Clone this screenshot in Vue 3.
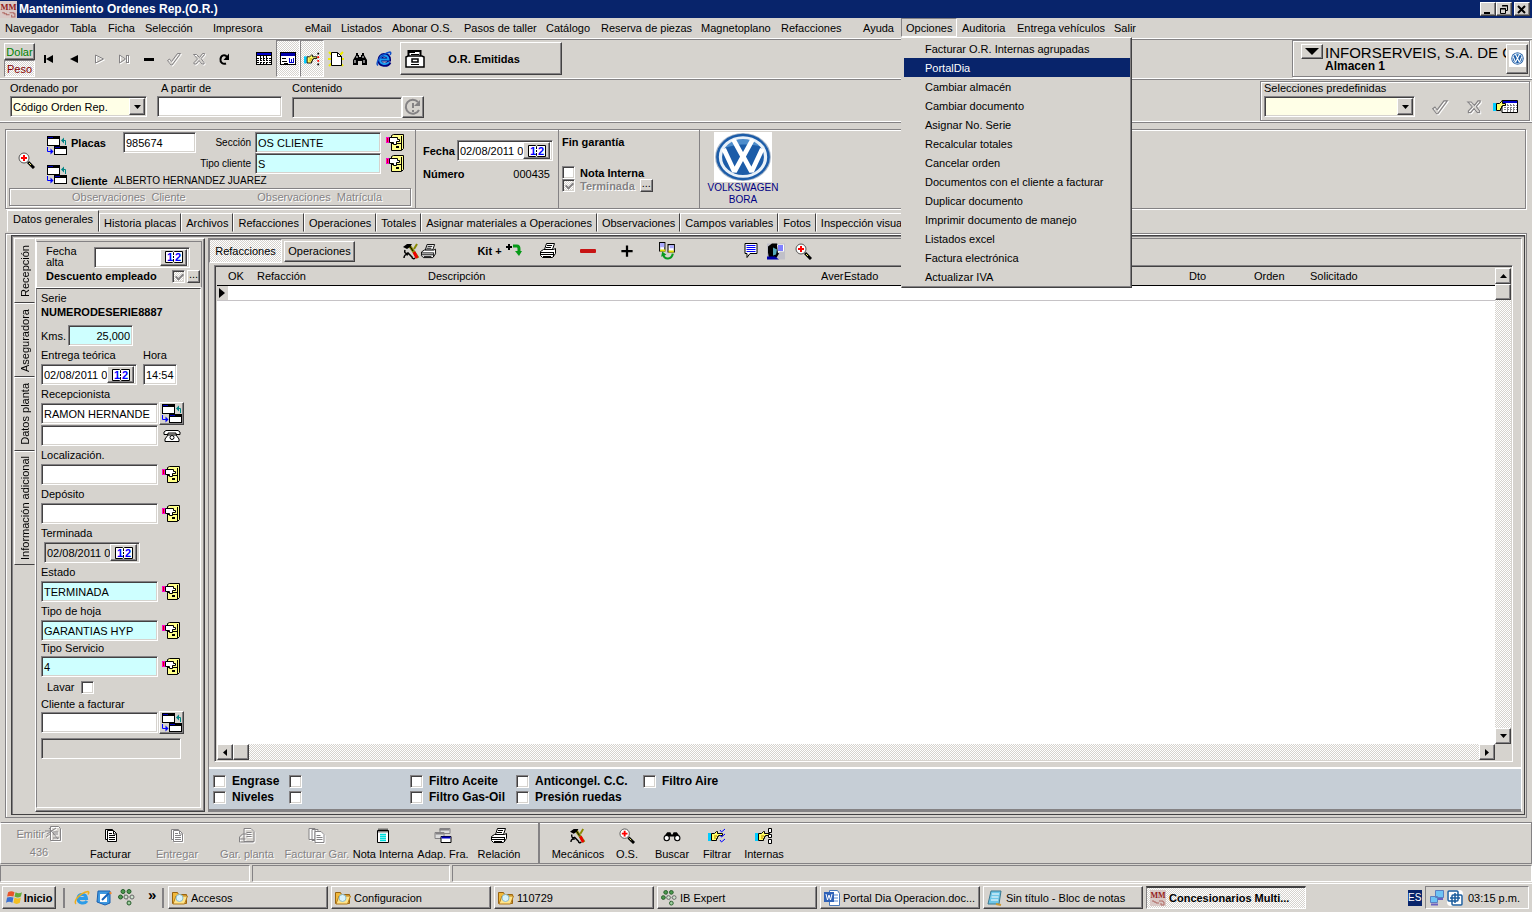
<template>
  <div class="app">
    <svg class="sprites" width="0" height="0" aria-hidden="true">
      <symbol id="app-logo" viewBox="0 0 16 16">
        <rect width="16" height="16" fill="#d9c9c6" />
        <text x="8" y="8" text-anchor="middle" font-family="Liberation Serif" font-size="8" font-weight="bold" fill="#941c1c">MM</text>
        <path d="M2 11h2v1h2v1h3M9 11h4v1h1v3h-3v-2" fill="none" stroke="#b06a64" />
      </symbol>
      <symbol id="first" viewBox="0 0 16 16"><path d="M3 4h2v8H3zM5 8l7-4v8z" fill="currentColor" /></symbol>
      <symbol id="prev" viewBox="0 0 16 16"><path d="M4 8l8-4v8z" fill="currentColor" /></symbol>
      <symbol id="next" viewBox="0 0 16 16"><path d="M4.500 4v8l8-4z" fill="none" stroke="currentColor" /></symbol>
      <symbol id="last" viewBox="0 0 16 16"><path d="M3.500 4v8l6-4zM10.500 4v8M12.500 4v8M10.500 4.500h2M10.500 11.500h2" fill="none" stroke="currentColor" /></symbol>
      <symbol id="minus" viewBox="0 0 16 16"><path d="M3 7h10v3H3z" fill="currentColor" /></symbol>
      <symbol id="plus" viewBox="0 0 16 16"><path d="M7 3h2v4h4v2H9v4H7V9H3V7h4z" fill="currentColor" /></symbol>
      <symbol id="check" viewBox="0 0 16 16"><path d="M1.500 9.500l2-1.500 2 2.500 6-8h3l-8.500 11.500h-1z" fill="none" stroke="currentColor" /></symbol>
      <symbol id="cross" viewBox="0 0 16 16"><path d="M2.500 3.500h3l3 3 3-4h2v1l-3.500 4 3 4v1.500h-2l-3-3.500-3 3.500h-2v-1.500l3.500-3.500-3-3.500z" fill="none" stroke="currentColor" /></symbol>
      <symbol id="redo" viewBox="0 0 16 16"><path d="M10 12.500c-3 1-6-1-5.500-4.500C5 4 9 3 11 6" fill="none" stroke="currentColor" stroke-width="2" /><path d="M13 2.500V9H7.500z" fill="currentColor" /></symbol>
      <symbol id="grid" viewBox="0 0 16 14">
        <path d="M0 0h16v13H0z" fill="#000" /><path d="M1 1h14v2H1z" fill="#00c" /><path d="M1 4h14v8H1z" fill="#fff" />
        <path d="M1 6.500h14M1 8.500h14M1 10.500h14M4.500 4v8M7.500 4v8M10.500 4v8" stroke="#000" stroke-dasharray="2 1" />
      </symbol>
      <symbol id="form" viewBox="0 0 16 14">
        <path d="M0 0h16v13H0z" fill="#000" /><path d="M1 1h14v3H1z" fill="#00a" /><path d="M1 4h14v8H1z" fill="#fff" />
        <path d="M2 6h4v1H2zM2 9h5v1H2zM4 11h4v1H4z" fill="#000" /><path d="M9 6h1v4h1V7h1v3h1V6h1v5H9z" fill="#00c" />
      </symbol>
      <symbol id="hand" viewBox="0 0 18 16">
        <path d="M0 5h3v8H0z" fill="#0cf" /><path d="M3.500 5.500h3l2-2h1v2h5v2h-4v1h-1v2h-1v2h-5z" fill="#ff6" stroke="#000" /><path d="M6 8h3M6 10h2" stroke="#b80" />
      </symbol>
      <symbol id="hand-list" viewBox="0 0 18 16"><use href="#hand" width="18" height="16" /><path d="M15 1h2v2h-2zM15 13h2v2h-2z" fill="#000" /><path d="M15 5h2v2h-2zM15 9h2v2h-2z" fill="#f00" /></symbol>
      <symbol id="hand-checks" viewBox="0 0 18 16"><use href="#hand" width="18" height="16" /><path d="M12 2l1.500 2L17 1M12 7l1.500 2L17 6M12 12l1.500 2 3.500-3" fill="none" stroke="#00f" /></symbol>
      <symbol id="hand-boxes" viewBox="0 0 18 16"><use href="#hand" width="18" height="16" /><path d="M13.500.5h3v4h-3zM13.500 6.500h3v3h-3zM13.500 11.500h3v4h-3z" fill="#fff" stroke="#000" /></symbol>
      <symbol id="hand-grid" viewBox="0 0 25 14">
        <path d="M0 3h3v8H0z" fill="#0cf" /><path d="M9 .5h15.500v12H9z" fill="#fff" stroke="#000" /><path d="M10 1h14v2H10z" fill="#00c" />
        <path d="M11 5.500h13M11 7.500h13M11 9.500h13M14.500 4v8M17.500 4v8M20.500 4v8" stroke="#848284" stroke-dasharray="2 1" />
        <path d="M3.500 3.500h3l2-2h1v2h3v2h-3v1h-1v2h-1v2h-4z" fill="#ff6" stroke="#000" />
      </symbol>
      <symbol id="new" viewBox="0 0 16 16"><path d="M1 1l14 14M15 1L1 15M0 8h16" stroke="#ee0" stroke-width="2" /><path d="M3.500 1.500h6l4 4v9h-10z" fill="#fff" stroke="#000" /><path d="M9.500 1.500v4h4" fill="none" stroke="#000" /></symbol>
      <symbol id="binoculars" viewBox="0 0 16 16"><path d="M4 2h2v2h1v2h2V4h1V2h2v2l3 5v5h-5v-4H6v4H1V9l3-5z" fill="#000" /><path d="M3 9v3M5 5v2M11 5v2M12 9v3" stroke="#fff" /></symbol>
      <symbol id="ie" viewBox="0 0 16 16"><path d="M13.500 11c-2 4-10 4-10-2S13 2 13 8.500H5" fill="none" stroke="#00007b" stroke-width="4" /><path d="M13 11c-2 3-9 3-9-2.500S12 3 12.500 8.500H5" fill="none" stroke="#1a9cf0" stroke-width="2" /><path d="M2 14.500C-1 12 5 3 14 1c1.500.5.500 2 0 3" fill="none" stroke="#1050c8" stroke-width="1.500" /></symbol>
      <symbol id="ie-gold" viewBox="0 0 16 16"><path d="M13 11c-2 3-9 3-9-2.500S12 3 12.500 8.500H5" fill="none" stroke="#2c9ce8" stroke-width="3" /><path d="M2 14C-1 12 5 3 14 1.500c1.500.5.500 2 0 3" fill="none" stroke="#edae1c" stroke-width="1.500" /></symbol>
      <symbol id="cabinet" viewBox="0 0 20 18"><path d="M3.500 1h12v6h-12z" fill="#fff" stroke="#000" stroke-width="2" /><path d="M4 2.500h6M6 4.500h8" stroke="#000" /><path d="M1 7l2-1h14l2 1v10H1z" fill="#fff" stroke="#000" stroke-width="1.500" /><path d="M7 9h6v3H7z" fill="none" stroke="#000" stroke-width="1.500" /><path d="M6 14.500h8" stroke="#000" /></symbol>
      <symbol id="refresh" viewBox="0 0 18 18"><path d="M14 4a7 7 0 1 0 1 8" fill="none" stroke="#848284" stroke-width="2" /><path d="M16 2v6h-6z" fill="#848284" /><path d="M9 5v5M9 12v2" stroke="#848284" stroke-width="2" /></symbol>
      <symbol id="down" viewBox="0 0 7 4" preserveAspectRatio="none"><path d="M0 0h7L3.500 4z" fill="#000" /></symbol>
      <symbol id="up" viewBox="0 0 7 4"><path d="M0 4h7L3.500 0z" fill="#000" /></symbol>
      <symbol id="left" viewBox="0 0 4 7"><path d="M4 0v7L0 3.500z" fill="#000" /></symbol>
      <symbol id="right" viewBox="0 0 4 7"><path d="M0 0v7l4-3.500z" fill="#000" /></symbol>
      <symbol id="marker" viewBox="0 0 6 10"><path d="M0 0v10l6-5z" fill="#000" /></symbol>
      <symbol id="zoom" viewBox="0 0 17 17"><path d="M10 10l6 6" stroke="#000" stroke-width="3" /><path d="M11 11l2 2" stroke="#ee6" stroke-width="1" /><circle cx="6" cy="6" r="5" fill="#fff" stroke="#555" /><path d="M6 3v6M3 6h6" stroke="#f00" stroke-width="2" /></symbol>
      <symbol id="windows" viewBox="0 0 20 20">
        <path d="M0 0h13v10H0zM7 10h13v9H7z" fill="#000" /><path d="M1 3h11v6H1zM8 13h11v5H8z" fill="#fff" /><path d="M1 1h5v1H1zM8 11h5v1H8z" fill="#00b" />
        <path d="M18.500 9V4.500H15" fill="none" stroke="#008484" /><path d="M14 4.500l3-3v6z" fill="#008484" />
        <path d="M.5 11v4.500H4" fill="none" stroke="#00f" /><path d="M6.500 15.500l-3-3v6z" fill="#00f" />
      </symbol>
      <symbol id="folder" viewBox="0 0 19 18">
        <path d="M5.500 1.500l2-1h10v14l-2 2h-10z" fill="#ff8" stroke="#000" /><path d="M15.500 2v14M6 9.500h9" stroke="#000" /><path d="M10 12h3v2h-3z" fill="#000" />
        <path d="M3.500 3.500h8v2h2v2h-3v3h-3v-2h-4z" fill="#fff" stroke="#000" /><path d="M0 3h3v6H0z" fill="#f0c" /><path d="M1 4h1v4H1z" fill="#d00" />
      </symbol>
      <symbol id="calendar" viewBox="0 0 18 12">
        <path d="M.5.5h7l1 1 1-1h8v11h-8l-1-1-1 1h-7z" fill="#fff" stroke="#000" />
        <path d="M8.500 2v9" stroke="#000" stroke-dasharray="2 1" />
        <text x="5" y="10" text-anchor="middle" font-family="Liberation Sans" font-size="11" font-weight="bold" fill="#00f">1</text>
        <text x="13" y="10" text-anchor="middle" font-family="Liberation Sans" font-size="11" font-weight="bold" fill="#00f">2</text>
      </symbol>
      <symbol id="vw" viewBox="0 0 54 54" preserveAspectRatio="none">
        <circle cx="27" cy="27" r="26" fill="#a9b8ca" /><circle cx="27" cy="27" r="25" fill="#1c5ca8" /><path d="M5 20C10 4 40 2 48 17C35 12 18 12 5 20z" fill="#4d8ccb" />
        <circle cx="27" cy="27" r="21" fill="none" stroke="#e8f0f8" stroke-width="3" />
        <path d="M18 8l9 19 9-19M9 18l10 25 8-17 8 17 10-25" fill="none" stroke="#fff" stroke-width="4.500" stroke-linejoin="bevel" />
      </symbol>
      <symbol id="phone" viewBox="0 0 18 12"><path d="M1 4.500V2l2-1.500h12L17 2v2.500h-4V3H5v1.500z" fill="#fff" stroke="#000" /><path d="M5 5h8l3 4v2.500H2V9z" fill="#fff" stroke="#000" /><circle cx="9" cy="7.500" r="2" fill="none" stroke="#000" /></symbol>
      <symbol id="tools" viewBox="0 0 17 17"><path d="M6 2l9 13" stroke="#880" stroke-width="3" /><path d="M6 2l4 6" stroke="#000" stroke-width="1" /><path d="M0 4l4-3h5l-2 3-3 2-2-1z" fill="#000" /><path d="M14 1l-3 5" stroke="#880" stroke-width="2" fill="none" /><path d="M2 7c-1 3 1 4 3 3l4 4c0 2 2 2 3 1M1 15c0-3 2-4 4-3" fill="none" stroke="#000" stroke-width="1.500" /><path d="M11 9l3 6" stroke="#e00" stroke-width="3" /></symbol>
      <symbol id="printer" viewBox="0 0 18 16"><path d="M5.500 6.500l2-6h8l-2 6z" fill="#fff" stroke="#000" /><path d="M8 2.500h5M7 4.500h5" stroke="#000" /><path d="M1.500 8.500l3-2h10l2-1v5l-3 4h-10l-2-2z" fill="#fff" stroke="#000" /><path d="M2 9.500h12M2 11.500h12M14.500 9v5M4 13.500h8" stroke="#000" /></symbol>
      <symbol id="kit-arrow" viewBox="0 0 16 16"><path d="M3 1v6M0 4h6" stroke="#000" stroke-width="2" /><path d="M7 3h4q2 0 2 3v3" fill="none" stroke="#079a18" stroke-width="3" /><path d="M9 8h7l-3 5z" fill="#079a18" /></symbol>
      <symbol id="red-minus" viewBox="0 0 16 16"><rect x="0" y="6" width="16" height="4" rx="1" fill="#c81414" /></symbol>
      <symbol id="transfer" viewBox="0 0 18 18"><path d="M1.500.5h5v8h-5zM9.500 2.500h6v7h-6z" fill="#fff" stroke="#000" /><path d="M2 1h4v4H2zM11 3h4v3h-4z" fill="#aaf" /><path d="M2 8h5M10 9h5" stroke="#dd0" stroke-width="2" /><path d="M5 12c1 5 8 5 9-1" fill="none" stroke="#0a9a20" stroke-width="2" /><path d="M3 14l1-5 4 3z" fill="#0a9a20" /></symbol>
      <symbol id="note" viewBox="0 0 14 16"><path d="M1.500.5h12v10h-7l-3 4v-4h-2z" fill="#fff" stroke="#000" /><path d="M3 2.500h9M3 4.500h9M3 6.500h9M3 8.500h9" stroke="#00f" /></symbol>
      <symbol id="face" viewBox="0 0 18 16"><path d="M0 0h18v16H0z" fill="#c0c0c8" /><path d="M1 3l4-3h5l2 3v7l-3 5H2l-1-6z" fill="#000" /><path d="M6 4l4 2-1 5-3 1z" fill="#5ab" /><path d="M0 13h8l4 3H0z" fill="#00a" /><path d="M10 1h7v7h-4l-2 2z" fill="#fff" /><path d="M11 2.500h5M11 4.500h5M11 6.500h5" stroke="#00f" /></symbol>
      <symbol id="doc" viewBox="0 0 14 16"><path d="M1.500 1.500h7v10h-7z" fill="#fff" stroke="currentColor" /><path d="M3.500 2.500h6l3 3v8h-9z" fill="#fff" stroke="currentColor" /><path d="M9.500 3v3h3M5 5.500h3M5 7.500h6M5 9.500h6M5 11.500h6" fill="none" stroke="currentColor" /></symbol>
      <symbol id="docs" viewBox="0 0 17 16"><path d="M.5.5h6v11h-6zM3.500 1.500h6v11h-6z" fill="#fff" stroke="currentColor" /><path d="M6.500 3.500h6l3 3v8h-9z" fill="#fff" stroke="currentColor" /><path d="M8 7.500h4M8 9.500h6M8 11.500h6" fill="none" stroke="currentColor" /></symbol>
      <symbol id="plant" viewBox="0 0 17 16"><path d="M5.500.5h7l3 3v10h-10zM8 4.500h5M8 6.500h5M8 8.500h5M1 9l3-3h4M1 9v5h14M1 11h6" fill="none" stroke="currentColor" /></symbol>
      <symbol id="issue" viewBox="0 0 17 17"><path d="M5.500 1.500h8l2 2v12h-10zM0 6h7M2 9l9-6M4 3l9 11M8 7h5M8 9h5M8 13h6M1 12l5-4" fill="none" stroke="currentColor" /></symbol>
      <symbol id="pad" viewBox="0 0 14 16"><path d="M1.500 2.500h11v12h-11z" fill="#fff" stroke="#000" /><path d="M3 .5v4M5 .5v4M7 .5v4M9 .5v4M11 .5v4" stroke="#000" /><path d="M4 6.500h6M4 8.500h6M4 10.500h6M4 12.500h6" stroke="#0dd" stroke-width="1.500" /></symbol>
      <symbol id="adapt" viewBox="0 0 17 16"><path d="M5.500.5h10v5h-10zM.5 4.500h9v6h-9z" fill="#ddd" stroke="#848284" /><path d="M5 1.500h10M1 5.500h8" stroke="#848284" stroke-width="2" /><path d="M6.500 8.500h10v6h-10z" fill="#fff" stroke="#000" /><path d="M7 9.500h9" stroke="#00b" stroke-width="2" /></symbol>
      <symbol id="glasses" viewBox="0 0 17 11"><path d="M1 6l3-4h3l1 2h1l1-2h3l3 4v3h-5V6H6v3H1z" fill="#000" /><circle cx="3.500" cy="7.500" r="2.500" fill="#fff" stroke="#000" /><circle cx="13.500" cy="7.500" r="2.500" fill="#fff" stroke="#000" /></symbol>
      <symbol id="start" viewBox="0 0 16 14"><path d="M2 2q3-2 6 0L7 6Q4 5 1 6z" fill="#e8552b" /><path d="M9 2q3 2 6 0l-1 4q-3 2-6 0z" fill="#63a93b" /><path d="M1 7q3-1 6 0l-1 5q-3-2-6 0z" fill="#3a70d0" /><path d="M8 7q3 2 6 0l-1 5q-3 2-6 0z" fill="#f2be22" /></symbol>
      <symbol id="desktop" viewBox="0 0 16 16"><path d="M2 1h12v12l-5 2-8-3z" fill="#3d98e0" stroke="#1a60b0" /><path d="M4 4h7v8H4z" fill="#fff" /><path d="M6 10l7-7" stroke="#1762b8" stroke-width="2" /><path d="M14 2l1 2" stroke="#e83" stroke-width="2" /></symbol>
      <symbol id="nodes" viewBox="0 0 17 17"><path d="M3 8h11M8 8l3 6M5 3l3 5" stroke="#aaa" /><g stroke="#255c2a" fill="#4c9a50"><circle cx="5" cy="2.500" r="2" /><circle cx="11" cy="2.500" r="2" /><circle cx="2.500" cy="8" r="2" /></g><g stroke="#666" fill="#cfe4cf"><circle cx="8" cy="8" r="2" /><circle cx="14" cy="8" r="2" /></g><circle cx="11" cy="14" r="2" stroke="#255c2a" fill="#9fce9f" /></symbol>
      <symbol id="task-folder" viewBox="0 0 16 14"><path d="M.5 12.500v-11h5l1 2h8v9z" fill="#f0b93c" stroke="#9a6410" /><path d="M4 5h11.500l-3 8H1z" fill="#ffe48a" stroke="#b27a1c" /><circle cx="7.500" cy="7" r="3.500" fill="#d8f2fb" stroke="#8bbccc" /></symbol>
      <symbol id="word" viewBox="0 0 16 16"><path d="M5.500.5h8l2 3v12h-10z" fill="#fff" stroke="#4a78b8" /><path d="M9 5h5M9 8h5M9 11h5" stroke="#5b8ad0" /><rect y="2" width="10" height="10" fill="#2f62b8" /><path d="M2 4l1.500 6L5 5l1.500 5L8 4" fill="none" stroke="#fff" /></symbol>
      <symbol id="notepad" viewBox="0 0 16 16"><path d="M4 1h10l-2 13H1z" fill="#6fc7e8" stroke="#3a7890" /><path d="M5 4h7M4.500 7h7M4 10h7" stroke="#fff" /><path d="M9 14l5 1" stroke="#c93" stroke-width="2" /></symbol>
      <symbol id="network" viewBox="0 0 16 16"><path d="M6.500.5h8v7h-8zM1.500 6.500h7v6h-7z" fill="#6ec3f5" stroke="#5b7fc0" /><path d="M9 9h5M2 14.500h7" stroke="#6a60c0" stroke-width="2" /></symbol>
      <symbol id="remote" viewBox="0 0 16 16"><rect width="16" height="16" rx="4" fill="#fff" /><g fill="none" stroke="#1b5c9c" stroke-width="1.500"><rect x="1" y="1" width="10" height="10" rx="1" /><rect x="5" y="5" width="10" height="10" rx="1" /><path d="M8 3v10M3 8h10" /></g></symbol>
    </svg>

    <header class="titlebar">
      <Icon name="app-logo" :w="17" :h="17" />
      <h1>Mantenimiento Ordenes Rep.(O.R.)</h1>
      <div class="win-buttons">
        <button class="raised" aria-label="Minimizar"><svg width="10" height="9"><path d="M1 7h6v2H1z" /></svg></button>
        <button class="raised" aria-label="Restaurar"><svg width="10" height="9"><path d="M3.500 1v-.5h5v5H7M3 1h6M1.500 3.500h5v5h-5zM1 4h6" fill="none" stroke="#000" /></svg></button>
        <button class="raised close" aria-label="Cerrar"><svg width="10" height="9"><path d="M1 1l7 7M8 1L1 8" stroke="#000" stroke-width="2" /></svg></button>
      </div>
    </header>

    <nav class="menubar">
      <div v-for="m in menus" :key="m" class="menu-item">
        <button :class="{ open: m === openMenu }">{{ m }}</button>
        <ul v-if="m === openMenu" class="dropdown">
          <li v-for="o in options" :key="o">
            <button :class="{ selected: o === 'PortalDia' }">{{ o }}</button>
          </li>
        </ul>
      </div>
    </nav>

    <section class="toolbar">
      <div class="currency">
        <button class="raised dolar">Dolar</button>
        <button class="pressed peso">Peso</button>
      </div>
      <div class="nav-tools">
        <button v-for="t in navTools" :key="t.icon" :class="{ off: t.off }" :aria-label="t.label"><Icon :name="t.icon" /></button>
      </div>
      <div class="view-tools">
        <button v-for="t in viewTools" :key="t.icon" :class="{ pressed: t.on }" :aria-label="t.label"><Icon :name="t.icon" /></button>
      </div>
      <button class="raised issued"><Icon name="cabinet" :w="20" :h="18" /><span>O.R. Emitidas</span></button>
      <div class="company etched">
        <button class="raised pick" aria-label="Empresa"><Icon name="down" :w="14" :h="7" /></button>
        <div class="company-name">
          <p class="big">INFORSERVEIS, S.A. DE C.V.</p>
          <p class="store">Almacen 1</p>
        </div>
        <button class="raised brand-btn" aria-label="Volkswagen"><Icon name="vw" :w="13" :h="13" /></button>
      </div>
    </section>

    <section class="filters">
      <div class="filter combo-136">
        <label for="orden">Ordenado por</label>
        <div class="combo">
          <select id="orden" class="sunken"><option>Código Orden Rep.</option></select>
          <span class="raised arrow"><Icon name="down" :w="7" :h="4" /></span>
        </div>
      </div>
      <div class="filter from">
        <label for="desde">A partir de</label>
        <input id="desde" class="sunken">
      </div>
      <div class="filter contains">
        <label for="contenido">Contenido</label>
        <div class="line">
          <input id="contenido" class="sunken plain">
          <button class="raised sq" aria-label="Actualizar"><Icon name="refresh" :w="18" :h="18" /></button>
        </div>
      </div>
      <div class="preset etched">
        <div class="filter">
          <label for="preset">Selecciones predefinidas</label>
          <div class="combo">
            <select id="preset" class="sunken"><option></option></select>
            <span class="raised arrow"><Icon name="down" :w="7" :h="4" /></span>
          </div>
        </div>
        <button class="off" aria-label="Aplicar"><Icon name="check" :w="18" :h="18" /></button>
        <button class="off" aria-label="Quitar"><Icon name="cross" :w="18" :h="18" /></button>
        <button aria-label="Ver selección"><Icon name="hand-grid" :w="25" :h="14" /></button>
      </div>
    </section>

    <section class="order etched">
      <div class="client">
        <div class="client-grid">
          <button class="find" aria-label="Buscar"><Icon name="zoom" :w="17" :h="17" /></button>
          <button class="link1" aria-label="Abrir placas"><Icon name="windows" :w="20" :h="20" /></button>
          <label class="bold plate" for="placas">Placas</label>
          <input id="placas" class="sunken" value="985674">
          <label class="rt" for="seccion">Sección</label>
          <input id="seccion" class="sunken cyan" value="OS CLIENTE">
          <button aria-label="Secciones"><Icon name="folder" :w="19" :h="18" /></button>
          <button class="link2" aria-label="Abrir cliente"><Icon name="windows" :w="20" :h="20" /></button>
          <label class="rt tipo" for="tipocli">Tipo cliente</label>
          <input id="tipocli" class="sunken cyan" value="S">
          <button aria-label="Tipos"><Icon name="folder" :w="19" :h="18" /></button>
          <p class="name"><b>Cliente</b><span>ALBERTO HERNANDEZ JUAREZ</span></p>
        </div>
        <div class="obs etched">
          <button class="off">Observaciones&nbsp; Cliente</button>
          <button class="off">Observaciones&nbsp; Matrícula</button>
        </div>
      </div>
      <div class="number">
        <div class="line">
          <label class="bold" for="fecha">Fecha</label>
          <div class="date sunken wide"><input id="fecha" value="02/08/2011 0"><button class="raised" aria-label="Calendario"><Icon name="calendar" :w="18" :h="12" /></button></div>
        </div>
        <p class="line num"><b>Número</b><span>000435</span></p>
      </div>
      <div class="warranty">
        <b>Fin garantía</b>
        <label class="line"><input type="checkbox"><b>Nota Interna</b></label>
        <div class="line"><label class="line off"><input type="checkbox" checked disabled><b>Terminada</b></label><button class="raised dots" aria-label="Más">...</button></div>
      </div>
      <div class="brand">
        <Icon name="vw" :w="58" :h="50" class="logo" />
        <span>VOLKSWAGEN</span>
        <span>BORA</span>
      </div>
    </section>

    <div class="tabs" role="tablist">
      <button v-for="(t, i) in tabs" :key="t" role="tab" :class="{ active: i === 0 }">{{ t }}</button>
    </div>

    <main class="page">
      <div class="page-in">
        <div class="side-tabs">
          <button v-for="(t, i) in sideTabs" :key="t" :class="{ active: i === 0 }"><span>{{ t }}</span></button>
        </div>

        <aside class="side">
          <div class="side-head">
            <div class="line">
              <label for="alta">Fecha alta</label>
              <div class="date sunken wide"><input id="alta"><button class="raised" aria-label="Calendario"><Icon name="calendar" :w="18" :h="12" /></button></div>
            </div>
            <div class="line discount">
              <label for="desc">Descuento empleado</label>
              <input id="desc" type="checkbox" checked disabled>
              <button class="raised dots" aria-label="Más">...</button>
            </div>
          </div>
          <div class="side-body">
            <p class="serie">Serie</p>
            <p class="vin">NUMERODESERIE8887</p>
            <div class="line kms">
              <label for="kms">Kms.</label>
              <input id="kms" class="sunken cyan" value="25,000">
            </div>
            <div class="line pair">
              <div class="field">
                <label for="entrega">Entrega teórica</label>
                <div class="date sunken wide"><input id="entrega" value="02/08/2011 02"><button class="raised" aria-label="Calendario"><Icon name="calendar" :w="18" :h="12" /></button></div>
              </div>
              <div class="field">
                <label for="hora">Hora</label>
                <input id="hora" class="sunken hour" value="14:54">
              </div>
            </div>
            <div class="field">
              <label for="recep">Recepcionista</label>
              <div class="line"><input id="recep" class="sunken" value="RAMON HERNANDE"><button class="raised big-sq" aria-label="Abrir"><Icon name="windows" :w="20" :h="20" /></button></div>
              <div class="line second"><input class="sunken" aria-label="Recepcionista 2"><button class="tool" aria-label="Llamar"><Icon name="phone" :w="18" :h="12" /></button></div>
            </div>
            <div class="field">
              <label for="loc">Localización.</label>
              <div class="line"><input id="loc" class="sunken"><button class="tool" aria-label="Elegir"><Icon name="folder" :w="19" :h="18" /></button></div>
            </div>
            <div class="field">
              <label for="dep">Depósito</label>
              <div class="line"><input id="dep" class="sunken"><button class="tool" aria-label="Elegir"><Icon name="folder" :w="19" :h="18" /></button></div>
            </div>
            <div class="field indent">
              <label for="term">Terminada</label>
              <div class="date sunken wide plain"><input id="term" value="02/08/2011 02"><button class="raised" aria-label="Calendario"><Icon name="calendar" :w="18" :h="12" /></button></div>
            </div>
            <div v-for="f in codeFields" :key="f.id" class="field" :class="{ tight: f.tight }">
              <label :for="f.id">{{ f.label }}</label>
              <div class="line"><input :id="f.id" class="sunken cyan" :value="f.value"><button class="tool" aria-label="Elegir"><Icon name="folder" :w="19" :h="18" /></button></div>
            </div>
            <label class="line wash">Lavar<input type="checkbox"></label>
            <div class="field tight">
              <label for="clifac">Cliente a facturar</label>
              <div class="line"><input id="clifac" class="sunken"><button class="raised big-sq" aria-label="Abrir"><Icon name="windows" :w="20" :h="20" /></button></div>
            </div>
            <input class="sunken plain total" aria-label="Nombre cliente" readonly>
          </div>
        </aside>

        <section class="parts">
          <div class="parts-bar">
            <button class="pressed">Refacciones</button>
            <button class="raised">Operaciones</button>
            <button class="c4 duo" aria-label="Taller"><Icon name="tools" :w="17" :h="17" /><Icon name="printer" :w="17" :h="15" /></button>
            <button class="c6 duo kit"><b>Kit +</b><Icon name="kit-arrow" :w="18" :h="16" /></button>
            <button aria-label="Imprimir"><Icon name="printer" :w="18" :h="16" /></button>
            <button aria-label="Quitar"><Icon name="red-minus" /></button>
            <button aria-label="Añadir"><Icon name="plus" :w="18" :h="18" /></button>
            <button aria-label="Transferir"><Icon name="transfer" :w="19" :h="19" /></button>
            <button class="c12" aria-label="Nota"><Icon name="note" :w="15" :h="16" /></button>
            <button aria-label="Usuario"><Icon name="face" :w="18" :h="17" /></button>
            <button aria-label="Zoom"><Icon name="zoom" :w="17" :h="17" /></button>
          </div>
          <div class="grid-box sunken">
            <div class="grid-view">
              <table>
                <colgroup><col v-for="(c, i) in columns" :key="i" :class="c.col"></colgroup>
                <thead><tr><th v-for="(c, i) in columns" :key="i">{{ c.label }}</th></tr></thead>
                <tbody><tr><td class="mark"><Icon name="marker" :w="6" :h="10" /></td><td v-for="n in columns.length - 1" :key="n"></td></tr></tbody>
              </table>
            </div>
            <div class="vscroll"><button class="raised" aria-label="Subir"><Icon name="up" :w="7" :h="4" /></button><span class="raised thumb"></span><button class="raised end" aria-label="Bajar"><Icon name="down" :w="7" :h="4" /></button></div>
            <div class="hscroll"><button class="raised" aria-label="Izquierda"><Icon name="left" :w="4" :h="7" /></button><span class="raised thumb"></span><button class="raised end" aria-label="Derecha"><Icon name="right" :w="4" :h="7" /></button></div>
          </div>
          <div class="checks">
            <label v-for="(c, i) in checks" :key="i"><input type="checkbox">{{ c }}</label>
          </div>
        </section>
      </div>
    </main>

    <section class="actions">
      <button class="off emit"><span class="line">Emitir<Icon name="issue" :w="17" :h="17" /></span><span>436</span></button>
      <button v-for="a in actions" :key="a.label" :class="{ off: a.off, sep: a.sep }"><Icon :name="a.icon" :w="18" :h="16" /><span>{{ a.label }}</span></button>
    </section>

    <div class="status"><span></span><span></span><span></span></div>

    <footer class="taskbar">
      <button class="raised start"><Icon name="start" :w="17" :h="15" /><b>Inicio</b></button>
      <div class="quick">
        <a href="#" aria-label="Internet Explorer"><Icon name="ie-gold" /></a>
        <a href="#" aria-label="Escritorio"><Icon name="desktop" /></a>
        <a href="#" aria-label="IB Expert"><Icon name="nodes" :w="17" :h="17" /></a>
        <span class="more">»</span>
      </div>
      <div class="tasks">
        <button v-for="t in tasks" :key="t.label" :class="t.on ? 'pressed on' : 'raised'"><Icon :name="t.icon" /><span>{{ t.label }}</span></button>
      </div>
      <span class="lang">ES</span>
      <div class="tray"><Icon name="network" /><Icon name="remote" /><time>03:15 p.m.</time></div>
    </footer>
  </div>
</template>

<script setup>
import { h, ref } from 'vue'

// icono tomado de los <symbol> de arriba
const Icon = (props) =>
  h('svg', { class: 'ico', width: props.w || 16, height: props.h || 16 }, [h('use', { href: '#' + props.name })])
Icon.props = ['name', 'w', 'h']

const openMenu = ref('Opciones')

const menus = [
  'Navegador', 'Tabla', 'Ficha', 'Selección', 'Impresora', 'eMail', 'Listados', 'Abonar O.S.',
  'Pasos de taller', 'Catálogo', 'Reserva de piezas', 'Magnetoplano', 'Refacciones', 'Ayuda',
  'Opciones', 'Auditoria', 'Entrega vehículos', 'Salir'
]

const options = [
  'Facturar O.R. Internas agrupadas', 'PortalDia', 'Cambiar almacén', 'Cambiar documento',
  'Asignar No. Serie', 'Recalcular totales', 'Cancelar orden', 'Documentos con el cliente a facturar',
  'Duplicar documento', 'Imprimir documento de manejo', 'Listados excel', 'Factura electrónica', 'Actualizar IVA'
]

const navTools = [
  { icon: 'first', label: 'Primero' },
  { icon: 'prev', label: 'Anterior' },
  { icon: 'next', label: 'Siguiente', off: true },
  { icon: 'last', label: 'Último', off: true },
  { icon: 'minus', label: 'Borrar' },
  { icon: 'check', label: 'Aceptar', off: true },
  { icon: 'cross', label: 'Cancelar', off: true },
  { icon: 'redo', label: 'Refrescar' }
]

const viewTools = [
  { icon: 'grid', label: 'Tabla' },
  { icon: 'form', label: 'Ficha', on: true },
  { icon: 'hand-list', label: 'Selección', on: true },
  { icon: 'new', label: 'Nuevo' },
  { icon: 'binoculars', label: 'Buscar' },
  { icon: 'ie', label: 'Internet' }
]

const tabs = [
  'Datos generales', 'Historia placas', 'Archivos', 'Refacciones', 'Operaciones', 'Totales',
  'Asignar materiales a Operaciones', 'Observaciones', 'Campos variables', 'Fotos', 'Inspección visual'
]

const sideTabs = ['Recepción', 'Aseguradora', 'Datos planta', 'Información adicional']

const codeFields = [
  { id: 'estado', label: 'Estado', value: 'TERMINADA' },
  { id: 'hoja', label: 'Tipo de hoja', value: 'GARANTIAS HYP' },
  { id: 'servicio', label: 'Tipo Servicio', value: '4', tight: true }
]

const columns = [
  { label: '', col: 'w-mark' },
  { label: 'OK', col: 'w-ok' },
  { label: 'Refacción', col: 'w-ref' },
  { label: 'Descripción', col: 'w-desc' },
  { label: 'Aver', col: 'w-aver' },
  { label: 'Estado', col: 'w-estado' },
  { label: 'Dto', col: 'w-dto' },
  { label: 'Orden', col: 'w-orden' },
  { label: 'Solicitado', col: '' }
]

const checks = ['Engrase', '', 'Filtro Aceite', 'Anticongel. C.C.', 'Filtro Aire', 'Niveles', '', 'Filtro Gas-Oil', 'Presión ruedas']

const actions = [
  { icon: 'doc', label: 'Facturar' },
  { icon: 'doc', label: 'Entregar', off: true },
  { icon: 'plant', label: 'Gar. planta', off: true },
  { icon: 'docs', label: 'Facturar Gar.', off: true },
  { icon: 'pad', label: 'Nota Interna' },
  { icon: 'adapt', label: 'Adap. Fra.' },
  { icon: 'printer', label: 'Relación' },
  { icon: 'tools', label: 'Mecánicos', sep: true },
  { icon: 'zoom', label: 'O.S.' },
  { icon: 'glasses', label: 'Buscar' },
  { icon: 'hand-checks', label: 'Filtrar' },
  { icon: 'hand-boxes', label: 'Internas' }
]

const tasks = [
  { icon: 'task-folder', label: 'Accesos' },
  { icon: 'task-folder', label: 'Configuracion' },
  { icon: 'task-folder', label: '110729' },
  { icon: 'nodes', label: 'IB Expert' },
  { icon: 'word', label: 'Portal Dia Operacion.doc...' },
  { icon: 'notepad', label: 'Sin título - Bloc de notas' },
  { icon: 'app-logo', label: 'Concesionarios Multi...', on: true }
]
</script>

<style>
body {
  margin: 0;
  background: #d6d3ce;
}
</style>

<style scoped>
.app {
  --face: #d6d3ce;
  --dark: #424142;
  --mid: #848284;
  --dither: repeating-conic-gradient(#fff 0 25%, #d6d3ce 0 50%) 0 0 / 2px 2px;
  display: flex;
  flex-direction: column;
  min-height: 100vh;
  background: var(--face);
  color: #000;
  font: 11px/14px "Liberation Sans", Arial, sans-serif;
  overflow: hidden;
}

.app * { box-sizing: border-box; }
.sprites { position: absolute; }
.ico { display: block; flex: none; }
h1, p, ul { margin: 0; padding: 0; }
ul { list-style: none; }

button {
  display: flex;
  align-items: center;
  justify-content: center;
  padding: 0;
  border: 0;
  background: none;
  color: inherit;
  font: inherit;
  white-space: nowrap;
}

input, select {
  display: block;
  min-width: 0;
  height: 21px;
  margin: 0;
  padding: 0 2px;
  border: 0;
  border-radius: 0;
  background: #fff;
  color: #000;
  font: inherit;
}

label { white-space: nowrap; }
.bold { font-weight: bold; }
.line { display: flex; align-items: center; }

.raised {
  background: var(--face);
  border: 1px solid;
  border-color: #fff var(--dark) var(--dark) #fff;
  box-shadow: inset -1px -1px var(--mid);
}

.pressed {
  background: var(--dither);
  border: 1px solid;
  border-color: var(--mid) #fff #fff var(--mid);
}

.sunken {
  border: 1px solid;
  border-color: var(--mid) #fff #fff var(--mid);
  box-shadow: inset 1px 1px var(--dark), inset -1px -1px var(--face);
}

.etched {
  border: 1px solid var(--mid);
  box-shadow: inset 1px 1px #fff, 1px 1px #fff;
}

.cyan { background: #ceffff; }
.plain { background: var(--face); }

.off {
  color: var(--mid);
  text-shadow: 1px 1px #fff;
}

.off .ico { filter: drop-shadow(1px 1px 0 #fff); }

input[type="checkbox"] {
  appearance: none;
  flex: none;
  width: 13px;
  height: 13px;
  padding: 0;
  border: 1px solid;
  border-color: var(--mid) #fff #fff var(--mid);
  box-shadow: inset 1px 1px var(--dark), inset -1px -1px var(--face);
}

input[type="checkbox"]:disabled { background: var(--dither); }

input[type="checkbox"]:checked::before {
  content: "";
  display: block;
  width: 3px;
  height: 6px;
  margin: 1px 4px;
  border: solid var(--mid);
  border-width: 0 2px 2px 0;
  transform: rotate(45deg);
}

/* barra de título */
.titlebar {
  display: flex;
  align-items: center;
  gap: 2px;
  height: 18px;
  padding-right: 2px;
  background: #08246b;
  color: #fff;
}

.titlebar h1 {
  flex: 1;
  font-size: 12px;
}

.win-buttons { display: flex; }
.win-buttons button { width: 16px; height: 14px; }
.win-buttons .close { margin-left: 2px; }

/* menú */
.menubar {
  display: grid;
  grid-template-columns: 65px 38px 37px 68px 92px 36px 51px 72px 82px 55px 100px 80px 82px 43px 56px 55px 97px 40px;
  height: 20px;
}

.menu-item { position: relative; }

.menu-item > button {
  justify-content: flex-start;
  width: 100%;
  height: 19px;
  padding-left: 5px;
}

.menu-item > .open {
  padding-left: 4px;
  border: 1px solid;
  border-color: var(--mid) #fff #fff var(--mid);
}

.dropdown {
  position: absolute;
  top: 19px;
  left: 0;
  z-index: 10;
  width: 231px;
  padding: 1px;
  background: var(--face);
  border: 1px solid;
  border-color: #fff var(--dark) var(--dark) var(--face);
  box-shadow: inset -1px -1px var(--mid);
}

.dropdown button {
  justify-content: flex-start;
  width: 226px;
  height: 19px;
  margin-left: 1px;
  padding-left: 21px;
}

.dropdown .selected {
  background: #08246b;
  color: #fff;
}

/* barra de herramientas */
.toolbar {
  display: flex;
  align-items: stretch;
  height: 41px;
  padding: 1px 2px 1px 4px;
  border-top: 1px solid #fff;
  border-bottom: 1px solid #fff;
  box-shadow: inset 0 1px var(--mid), 0 1px var(--mid);
}

.currency {
  width: 32px;
  padding-top: 3px;
}

.currency button { width: 31px; height: 17px; }
.currency .dolar { color: #008200; }
.currency .peso { color: #840000; }
.nav-tools, .view-tools { display: flex; }
.nav-tools button { width: 25px; }

.view-tools {
  margin-left: 16px;
}

.view-tools button { width: 24px; }

.issued {
  position: relative;
  align-self: center;
  width: 162px;
  height: 33px;
  margin-left: 4px;
  font-weight: bold;
}

.issued .ico {
  position: absolute;
  left: 4px;
}

.issued span { padding-left: 6px; }

.company {
  display: flex;
  align-items: center;
  width: 238px;
  margin-left: auto;
  padding-left: 8px;
}

.pick {
  align-self: flex-start;
  width: 22px;
  height: 15px;
  margin: 3px 2px 0 0;
}

.company-name {
  flex: 1;
  overflow: hidden;
  white-space: nowrap;
}

.company-name .big { font-size: 15px; line-height: 14px; }
.company-name .store { font-size: 12px; line-height: 12px; font-weight: bold; }

.brand-btn {
  flex: none;
  width: 22px;
  height: 30px;
  margin-right: 1px;
}

.brand-btn .ico { background: #fff; outline: 2px solid #fff; }

/* filtros */
.filters {
  display: flex;
  gap: 10px;
  height: 43px;
  padding: 2px 2px 0 10px;
  border-bottom: 1px solid #fff;
  box-shadow: 0 1px var(--mid);
}

.filter { display: flex; flex-direction: column; }
.filter label { line-height: 15px; }
.combo-136 { width: 137px; }
.from { width: 125px; }
.from label { padding-left: 4px; }
.contains { width: 132px; }
.contains input { width: 110px; }
.sq { width: 22px; height: 22px; }

.combo { position: relative; }

.combo select {
  appearance: none;
  width: 100%;
  background: #ffffe7;
}

.combo .arrow {
  position: absolute;
  top: 2px;
  right: 2px;
  display: flex;
  align-items: center;
  justify-content: center;
  width: 16px;
  height: 17px;
  pointer-events: none;
}

.preset {
  display: flex;
  align-items: flex-end;
  gap: 16px;
  width: 270px;
  height: 40px;
  margin-left: auto;
  padding: 0 0 3px 3px;
}

.preset .filter { width: 151px; }
.preset > button { height: 20px; }
.preset > button:last-child { margin-left: -6px; }

/* cabecera de la orden */
.order {
  display: flex;
  height: 80px;
  margin: 7px 6px 0 5px;
}

.client {
  width: 410px;
  padding: 2px 4px 0 3px;
  border-right: 1px solid var(--mid);
}

.client-grid {
  display: grid;
  grid-template-columns: 34px 27px 53px 73px 59px 126px 28px;
  grid-template-rows: 21px 21px 14px;
  align-items: center;
}

.find { grid-row: 1 / 4; }
.link1 { grid-column: 2; padding-top: 6px; }
.link2 { grid-column: 2; grid-row: 2 / 4; padding-top: 8px; }
.plate { padding-left: 1px; }
.rt { padding-right: 4px; text-align: right; font-size: 10px; }
.tipo { grid-column: 3 / 6; }

.name {
  display: flex;
  gap: 6px;
  grid-column: 3 / 7;
  grid-row: 3;
  padding-left: 1px;
}

.name span { font-size: 10px; }

.obs {
  display: flex;
  justify-content: space-between;
  height: 18px;
  padding: 0 28px 0 62px;
}

.number {
  width: 143px;
  padding: 10px 5px 0 7px;
  border-right: 1px solid var(--mid);
}

.number .line { justify-content: space-between; }
.num { padding: 6px 3px 0 0; }

.date {
  display: flex;
  align-items: center;
  height: 21px;
  padding: 1px 2px 1px 0;
  background: #fff;
}

.date.plain { background: var(--face); }
.date input { flex: 1; width: 0; height: 17px; padding-right: 0; background: none; }
.date button { flex: none; width: 27px; height: 17px; }
.wide { width: 96px; }

.warranty {
  width: 141px;
  padding: 6px 3px;
  border-right: 1px solid var(--mid);
}

.warranty > b { display: block; margin-bottom: 18px; line-height: 12px; }
.warranty .line { gap: 5px; height: 13px; }

.dots {
  align-items: flex-end;
  width: 13px;
  height: 13px;
  padding-bottom: 3px;
  line-height: 10px;
}

.brand {
  display: flex;
  flex-direction: column;
  align-items: center;
  width: 86px;
  padding-top: 2px;
  color: #000084;
  font-size: 10px;
  line-height: 12px;
}

.logo { background: #fff; }

/* pestañas */
.tabs {
  display: flex;
  align-items: flex-end;
  height: 23px;
  margin-left: 7px;
}

.tabs button {
  height: 19px;
  padding: 0 4px;
  border: 1px solid;
  border-color: #fff var(--dark) transparent #fff;
}

.tabs .active { height: 22px; padding: 0 5px 4px; }

.page {
  display: flex;
  flex: 1;
  margin: 1px 5px 4px;
  padding: 1px 1px 2px 5px;
  border: 1px solid var(--mid);
  box-shadow: inset 1px 1px #fff;
}

.page-in {
  display: flex;
  flex: 1;
  border: 1px solid var(--dark);
  box-shadow: inset 1px 1px var(--mid);
  padding: 2px;
}

.side-tabs { width: 21px; }

.side-tabs button {
  width: 21px;
  height: 74px;
  border: 1px solid;
  border-color: #fff transparent var(--dark) #fff;
}

.side-tabs .active { height: 65px; }
.side-tabs button:last-child { height: 114px; }
.side-tabs span { writing-mode: vertical-rl; transform: rotate(180deg); }

.side {
  display: flex;
  flex-direction: column;
  width: 170px;
  margin-right: 3px;
  border: 1px solid;
  border-color: #fff var(--dark) var(--dark) #fff;
  box-shadow: inset -1px -1px var(--mid);
}

.side-head {
  height: 47px;
  margin: 2px 2px 0 0;
  padding: 4px 1px 0 9px;
  border: 1px solid;
  border-color: var(--mid) var(--mid) #fff #fff;
}

.side-head label { width: 48px; line-height: 11px; white-space: normal; }
.side-head .discount { gap: 2px; padding-top: 2px; }
.side-head .discount label { flex: 1; width: auto; font-weight: bold; white-space: nowrap; }

.side-body {
  flex: 1;
  margin: 0 3px 3px 0;
  padding: 2px 0 0 4px;
  border: 1px solid;
  border-color: var(--dark) #fff #fff var(--mid);
}

.serie, .vin { line-height: 14px; }
.vin { font-weight: bold; }
.kms { gap: 2px; padding-top: 6px; }
.kms input { width: 65px; text-align: right; }
.pair { gap: 6px; }
.field label { display: block; line-height: 18px; }
.tight label { line-height: 15px; }
.field .line input { width: 117px; }
.field .second { padding-top: 1px; }
.field .hour { width: 34px; }
.tool { width: 27px; height: 21px; }
.big-sq { width: 25px; height: 23px; margin: -1px 0 -1px 1px; }
.indent .date { margin-left: 3px; }
.wash { gap: 6px; height: 20px; padding-left: 6px; }
.total { width: 140px; margin-top: 5px; }

/* refacciones */
.parts {
  display: flex;
  flex: 1;
  flex-direction: column;
  min-width: 0;
  border: 1px solid;
  border-color: var(--mid) #fff var(--mid) var(--mid);
}

.parts-bar {
  display: grid;
  grid-template-columns: 73px 73px 46px 38px 36px 50px 46px 34px 44px 36px 78px 26px 28px;
  align-items: center;
  height: 24px;
}

.parts-bar .raised { height: 21px; margin-left: 2px; }
.parts-bar .pressed { height: 24px; }
.c4 { grid-column: 4; }
.c6 { grid-column: 6; }
.c12 { justify-content: flex-end; padding-right: 5px; }
.kit { gap: 3px; }

.grid-box {
  display: grid;
  flex: 1;
  grid-template-columns: 1fr 16px;
  grid-template-rows: 1fr 16px;
  margin: 2px 8px 5px 5px;
  padding: 2px 1px 1px 2px;
}

.grid-view { background: #fff; overflow: hidden; }

table {
  width: 100%;
  border-collapse: collapse;
  table-layout: fixed;
}

th {
  height: 17px;
  padding: 0;
  background: var(--face);
  border-bottom: 1px solid #000;
  font-weight: normal;
  text-align: left;
  overflow: hidden;
  white-space: nowrap;
}

td {
  height: 15px;
  padding: 0;
  border-bottom: 1px solid #c6c3c6;
}

.mark { padding-left: 2px; background: var(--face); }
.w-mark { width: 11px; }
.w-ok { width: 29px; }
.w-ref { width: 171px; }
.w-desc { width: 393px; }
.w-aver { width: 23px; }
.w-estado { width: 345px; }
.w-dto { width: 65px; }
.w-orden { width: 56px; }

.vscroll, .hscroll { display: flex; background: var(--dither); }
.vscroll { flex-direction: column; }
.vscroll .raised, .hscroll .raised { width: 16px; height: 16px; }
.vscroll .end { margin-top: auto; }
.hscroll .end { margin-left: auto; }

.checks {
  display: grid;
  grid-template-columns: 76px 121px 106px 127px 1fr;
  grid-auto-rows: 16px;
  height: 44px;
  padding: 4px 4px 0;
  background: #c6ced6;
  border-top: 2px solid #fff;
  border-bottom: 2px solid var(--mid);
  font-size: 12px;
  font-weight: bold;
}

.checks label { display: flex; align-items: center; gap: 6px; }

/* acciones */
.actions {
  display: grid;
  grid-template-columns: 76px 67px 66px 74px 66px 66px 54px 58px 80px 38px 52px 38px 56px;
  height: 42px;
  border: 1px solid var(--mid);
  border-left-color: #fff;
  box-shadow: inset 0 1px #fff;
}

.actions button {
  flex-direction: column;
  justify-content: space-between;
  padding: 5px 0 2px;
}

.actions .emit { padding-top: 2px; padding-bottom: 4px; }

.actions .sep {
  margin-left: 10px;
  border-left: 2px solid var(--mid);
  padding-left: 8px;
}

.status {
  display: grid;
  grid-template-columns: 250px 198px 1fr;
  gap: 2px;
  height: 19px;
  padding: 1px 0;
}

.status span {
  border: 1px solid;
  border-color: var(--mid) #fff #fff var(--mid);
}

/* barra de tareas */
.taskbar {
  display: flex;
  align-items: center;
  height: 29px;
  padding: 0 3px 1px 2px;
  border-top: 1px solid #fff;
}

.start { gap: 1px; width: 54px; height: 23px; }

.quick {
  display: flex;
  align-items: center;
  gap: 6px;
  width: 101px;
  height: 20px;
  margin: 0 4px 0 7px;
  padding-left: 9px;
  border-left: 2px solid var(--mid);
  border-right: 2px solid var(--mid);
}

.more { padding: 0 0 6px 7px; font-size: 15px; font-weight: bold; }
.tasks { display: flex; flex: 1; gap: 3px; min-width: 0; }

.tasks button {
  gap: 3px;
  justify-content: flex-start;
  width: 160px;
  height: 23px;
  padding-left: 3px;
}

.tasks .on { border-top: 2px solid var(--dark); font-weight: bold; }

.lang {
  width: 14px;
  height: 16px;
  margin-right: 3px;
  background: #08246b;
  color: #fff;
  font-size: 10px;
  line-height: 16px;
  overflow: hidden;
}

.tray {
  display: flex;
  align-items: center;
  gap: 2px;
  width: 104px;
  height: 23px;
  padding-left: 3px;
  border: 1px solid;
  border-color: var(--mid) #fff #fff var(--mid);
}

.tray time { padding-left: 3px; }
</style>
